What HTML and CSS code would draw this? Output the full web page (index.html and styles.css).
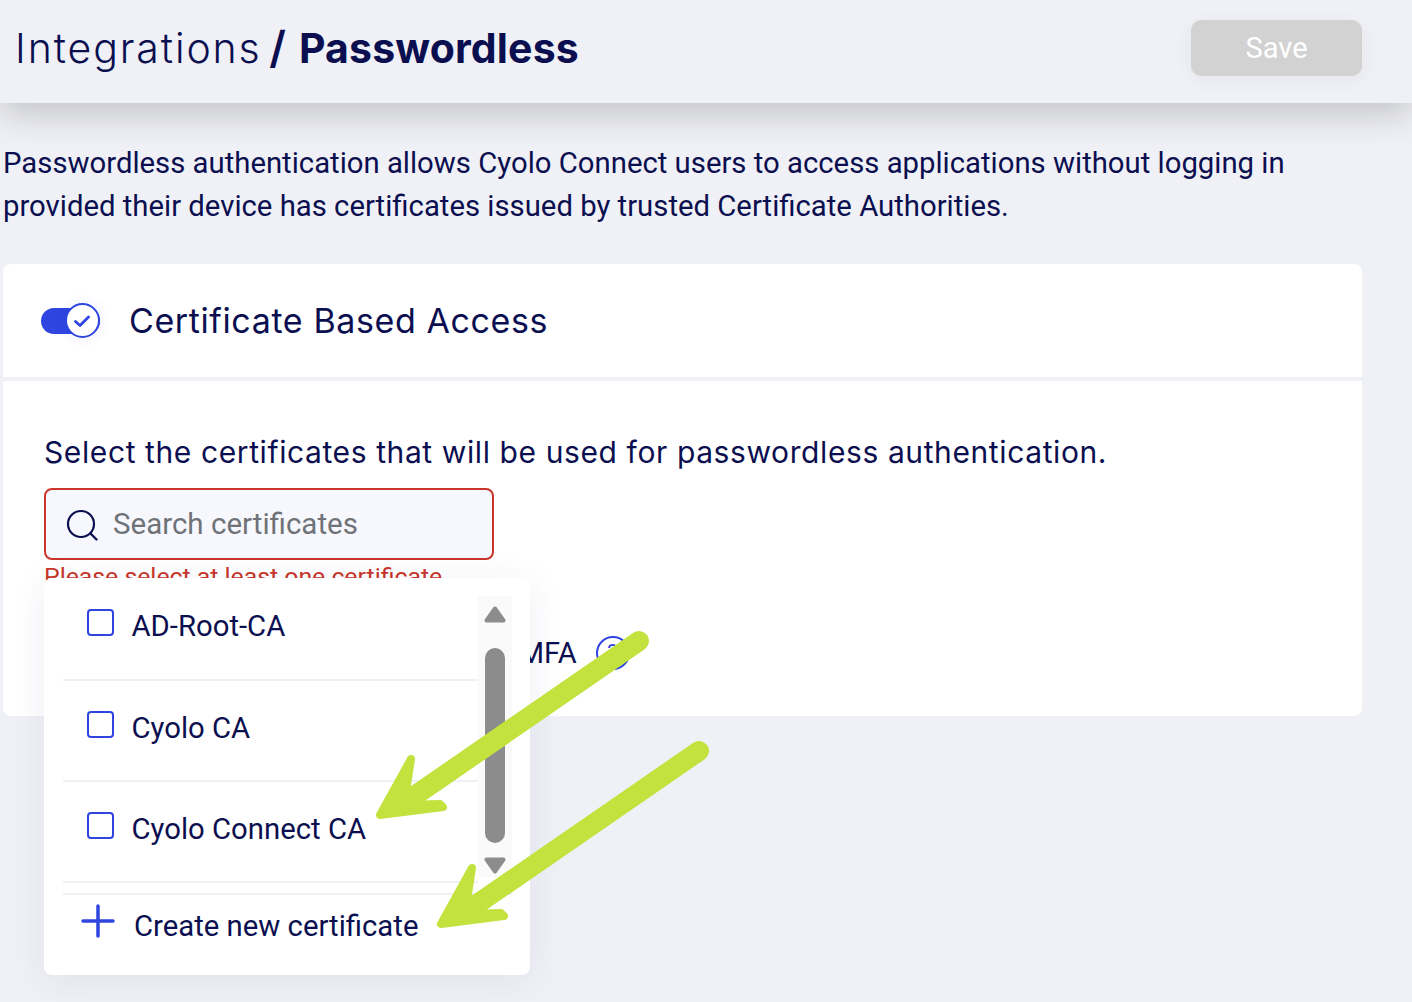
FILE: index.html
```html
<!DOCTYPE html>
<html lang="en">
<head>
<meta charset="utf-8">
<title>Integrations / Passwordless</title>
<link rel="stylesheet" href="styles.css">
</head>
<body>
<div class="page">
  <header class="topbar">
    <h1 class="title"><span class="crumb">Integrations</span> <span class="current"><span class="slash">/</span> Passwordless</span></h1>
    <button class="save" type="button">Save</button>
  </header>
  <main class="content">
    <p class="intro">Passwordless authentication allows Cyolo Connect users to access applications without logging in<br>provided their device has certificates issued by trusted Certificate Authorities.</p>
    <section class="card">
      <div class="card-head">
        <span class="toggle">
          <span class="toggle-knob">
            <svg viewBox="0 0 18 18" width="18" height="18"><path d="M1.500 9.500 6 13.500 14.500 5" fill="none" stroke="#2f45e0" stroke-width="2.800" stroke-linecap="round" stroke-linejoin="round"/></svg>
          </span>
        </span>
        <h2 class="card-title">Certificate Based Access</h2>
      </div>
      <div class="card-body">
        <p class="select-label">Select the certificates that will be used for passwordless authentication.</p>
        <div class="search-wrap">
          <div class="search">
            <svg class="search-icon" viewBox="0 0 32 32" width="32" height="32"><circle cx="15" cy="15" r="13" fill="none" stroke="#0b0f50" stroke-width="2.200"/><path d="M24.500 24.500 30.500 30.500" stroke="#0b0f50" stroke-width="2.400" stroke-linecap="round"/></svg>
            <span class="placeholder">Search certificates</span>
          </div>
          <p class="error">Please select at least one certificate</p>
          <div class="dropdown">
            <ul class="options">
              <li class="option"><span class="checkbox"></span><span class="option-text">AD-Root-CA</span></li>
              <li class="option"><span class="checkbox"></span><span class="option-text">Cyolo CA</span></li>
              <li class="option"><span class="checkbox"></span><span class="option-text">Cyolo Connect CA</span></li>
            </ul>
            <div class="scrollbar">
              <svg class="scroll-arrow" viewBox="0 0 22 17" width="22" height="17"><path d="M11 2.500 19.500 14.500H2.500Z" fill="#8c8c8c" stroke="#8c8c8c" stroke-width="4" stroke-linejoin="round"/></svg>
              <span class="scroll-thumb"></span>
              <svg class="scroll-arrow" viewBox="0 0 22 17" width="22" height="17"><path d="M2.500 2.500H19.500L11 14.500Z" fill="#8c8c8c" stroke="#8c8c8c" stroke-width="4" stroke-linejoin="round"/></svg>
            </div>
            <div class="create">
              <svg viewBox="0 0 34 34" width="34" height="34"><path d="M17 2V32M2 17H32" stroke="#2f45e0" stroke-width="3.500" stroke-linecap="round"/></svg>
              <span class="create-text">Create new certificate</span>
            </div>
          </div>
        </div>
        <div class="mfa-row">
          <span class="mfa-text">Allow access without MFA</span>
          <span class="help">?</span>
        </div>
      </div>
    </section>
  </main>
  <svg class="annotations" viewBox="0 0 1412 1002" width="1412" height="1002">
    <g fill="#c3e23e" stroke="#c3e23e" stroke-linejoin="round" stroke-linecap="round">
      <path d="M639 641 410 799" fill="none" stroke-width="20"/>
      <path d="M411 759 380 815 443 807 440 804 404 805Z" stroke-width="8"/>
      <path d="M699 751 470 909" fill="none" stroke-width="20"/>
      <path d="M472 868 441 924 504 916 501 913 465 914Z" stroke-width="8"/>
    </g>
  </svg>
</div>
</body>
</html>
```
FILE: styles.css
```css
* { box-sizing: border-box; }
html, body { margin: 0; padding: 0; }
body { background: #f0f1f6; color: #0b0f50; font-family: "Roboto", "Liberation Sans", sans-serif; }
.page { position: relative; width: 1412px; height: 1002px; overflow: hidden; background: #f0f1f6; }
.topbar { position: relative; display: flex; align-items: center; justify-content: space-between; height: 103px; padding: 0 50px 7px 15px; background: #f0f1f6; box-shadow: 0 10px 36px rgba(0, 0, 0, .2); }
.title { margin: 0; font-family: "Inter", sans-serif; font-size: 41px; font-weight: 300; line-height: 48px; color: #0b0f50; white-space: nowrap; }
.crumb { letter-spacing: 1.9px; }
.current { font-weight: 700; letter-spacing: .15px; }
.slash { display: inline-block; margin: 0 3px 0 -4px; font-size: 44px; font-weight: 600; line-height: 40px; }
.save { width: 171px; height: 56px; border: 0; border-radius: 10px; background: #d2d2d2; color: #fff; font: 400 29px "Roboto", sans-serif; box-shadow: 0 4px 20px rgba(0, 0, 0, .05); }
.content { padding: 39px 50px 0 3px; }
.intro { margin: 0 0 36px; font-size: 29.3px; line-height: 43px; white-space: nowrap; }
.card { height: 452px; border-radius: 8px; background: #fff; }
.card-head { display: flex; align-items: center; gap: 29px; height: 113px; padding-left: 38px; }
.toggle { display: flex; justify-content: flex-end; align-items: center; width: 59px; height: 26px; border-radius: 13px; background: #2f45e0; }
.toggle-knob { display: flex; align-items: center; justify-content: center; width: 35px; height: 35px; border: 2px solid #2f45e0; border-radius: 50%; background: #fff; flex: none; box-shadow: 0 0 12px rgba(47, 69, 224, .1); }
.card-title { margin: 0; font-family: "Inter", sans-serif; font-size: 34px; letter-spacing: .6px; font-weight: 400; line-height: 40px; color: #0b0f50; white-space: nowrap; }
.card-body { padding: 54px 0 0 41px; border-top: 4px solid #f0f1f6; }
.select-label { margin: 0 0 19px; font-family: "Inter", sans-serif; font-size: 30px; letter-spacing: .6px; line-height: 34px; font-weight: 400; white-space: nowrap; }
.search-wrap { position: relative; width: 450px; }
.search { display: flex; align-items: center; gap: 15px; height: 72px; padding: 0 0 0 20px; border: 2px solid #c9352a; border-radius: 8px; background: #f7f8fe; }
.search-icon { flex: none; margin-top: 2px; }
.placeholder { font-size: 29.500px; color: #6f7378; }
.error { margin: 4px 0 0; font-size: 24.800px; line-height: 26px; color: #c9352a; white-space: nowrap; }
.dropdown { position: absolute; left: 0; top: 90px; width: 486px; height: 397px; padding: 0 18px 0 19px; border-radius: 8px; background: #fff; box-shadow: 0 6px 36px rgba(40, 50, 110, .08); }
.options { list-style: none; margin: 0; padding: 0; width: 415px; height: 305px; }
.option { display: flex; align-items: flex-start; gap: 17.500px; height: 101px; padding: 30px 0 0 24px; border-bottom: 2px solid #f0f1f6; }
.option:first-child { height: 103px; padding-top: 31px; }
.checkbox { flex: none; width: 27px; height: 27px; border: 2px solid #2f45e0; border-radius: 4px; }
.option-text { font-size: 29.3px; line-height: 34px; }
.scrollbar { position: absolute; top: 18px; right: 18px; display: flex; flex-direction: column; align-items: center; width: 34px; height: 281px; padding: 10px 0 3px; background: #fafafa; }
.scroll-arrow { flex: none; }
.scroll-thumb { flex: none; width: 20px; height: 195px; margin: 25px 0 14px; border-radius: 10px; background: #8c8c8c; }
.create { display: flex; align-items: flex-start; gap: 19px; height: 80px; margin-top: 10px; padding: 9px 0 0 18px; border-top: 2px solid #f0f1f6; }
.create-text { font-size: 29.3px; line-height: 34px; padding-top: 5px; }
.mfa-row { display: flex; align-items: center; gap: 19px; margin-top: 46px; padding-left: 194px; font-size: 29px; line-height: 34px; }
.help { display: flex; align-items: center; justify-content: center; width: 34px; height: 34px; border: 2.500px solid #2f45e0; border-radius: 50%; color: #2f45e0; font-size: 22px; }
.annotations { position: absolute; left: 0; top: 0; pointer-events: none; }
```
